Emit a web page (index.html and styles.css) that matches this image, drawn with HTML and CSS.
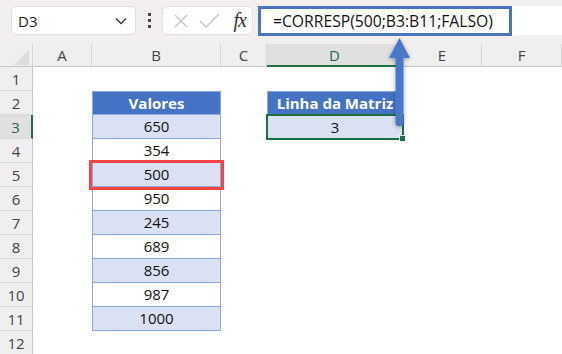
FILE: index.html
```html
<!doctype html>
<html>
<head>
<meta charset="utf-8">
<title>CORRESP</title>
<link rel="stylesheet" href="styles.css">
</head>
<body>
<div class="toolbar">
  <div class="namebox">
    <span>D3</span>
    <svg class="chev" width="12" height="8" viewBox="0 0 12 8"><path d="M1 1.5 L6 6.5 L11 1.5" fill="none" stroke="#333" stroke-width="1.3"/></svg>
  </div>
  <div class="dots"><i></i><i></i><i></i></div>
  <div class="fxbox">
    <svg width="16" height="16" viewBox="0 0 16 16"><path d="M2 2 L14 14 M14 2 L2 14" stroke="#c4c4c4" stroke-width="1.4" fill="none"/></svg>
    <svg width="22" height="16" viewBox="0 0 22 16"><path d="M1 8 L7 14 L20 1" stroke="#c4c4c4" stroke-width="1.4" fill="none"/></svg>
    <span class="fx">fx</span>
  </div>
  <div class="formula">
    <div class="formula-input">=CORRESP(500;B3:B11;FALSO)</div>
  </div>
</div>

<div class="sheet">
  <div class="corner"><b></b></div>
  <div class="hd">A</div><div class="hd">B</div><div class="hd">C</div><div class="hd on">D</div><div class="hd">E</div><div class="hd">F</div>

  <div class="rh">1</div><div></div><div></div><div></div><div></div><div></div><div></div>

  <div class="rh">2</div><div></div><div class="th top">Valores</div><div></div><div class="th top">Linha da Matriz</div><div></div><div></div>

  <div class="rh on">3</div><div></div><div class="td band">650</div><div></div><div class="td band sel">3<em></em></div><div></div><div></div>

  <div class="rh">4</div><div></div><div class="td">354</div><div></div><div></div><div></div><div></div>

  <div class="rh">5</div><div></div><div class="td band found">500</div><div></div><div></div><div></div><div></div>

  <div class="rh">6</div><div></div><div class="td">950</div><div></div><div></div><div></div><div></div>

  <div class="rh">7</div><div></div><div class="td band">245</div><div></div><div></div><div></div><div></div>

  <div class="rh">8</div><div></div><div class="td">689</div><div></div><div></div><div></div><div></div>

  <div class="rh">9</div><div></div><div class="td band">856</div><div></div><div></div><div></div><div></div>

  <div class="rh">10</div><div></div><div class="td">987</div><div></div><div></div><div></div><div></div>

  <div class="rh">11</div><div></div><div class="td band">1000</div><div></div><div></div><div></div><div></div>

  <div class="rh">12</div><div></div><div></div><div></div><div></div><div></div><div></div>
</div>

<svg class="arrow" width="40" height="100" viewBox="0 0 40 100">
  <defs>
    <filter id="sh" x="-50%" y="-20%" width="200%" height="140%">
      <feDropShadow dx="0" dy="1" stdDeviation="2" flood-color="#000" flood-opacity="0.35"/>
    </filter>
  </defs>
  <g filter="url(#sh)" fill="#4a78c9">
    <rect x="15.5" y="20" width="8" height="71" rx="3"/>
    <polygon points="9,23 19.5,3 30,23"/>
  </g>
</svg>
</body>
</html>
```

FILE: styles.css
```css
body {
	margin: 0;
	width: 562px;
	height: 354px;
	overflow: hidden;
	background: #fff;
	font-family: "Open Sans", "Liberation Sans", sans-serif;
	position: relative;
}
.toolbar {
	height: 44px;
	background: #f3efef;
	display: flex;
	align-items: flex-start;
	padding-top: 6px;
	box-sizing: border-box;
}
.namebox {
	margin-left: 11px;
	width: 125px;
	height: 29px;
	box-sizing: border-box;
	background: #fff;
	border: 1px solid #e3dfdf;
	border-radius: 5px;
	display: flex;
	align-items: center;
	justify-content: space-between;
	padding: 0 8px 0 6px;
	font-size: 15px;
	color: #222;
}
.chev {
	margin-top: 1px;
}
.dots {
	width: 26px;
	height: 29px;
	display: flex;
	flex-direction: column;
	align-items: center;
	justify-content: center;
	gap: 3px;
}
.dots i {
	display: block;
	width: 3px;
	height: 3px;
	background: #444;
}
.fxbox {
	width: 91px;
	height: 29px;
	box-sizing: border-box;
	background: #fff;
	border: 1px solid #e3dfdf;
	border-radius: 5px;
	display: flex;
	align-items: center;
	padding: 0 6px 0 10px;
	gap: 10px;
}
.fx {
	margin-left: auto;
	font-family: "Liberation Serif", serif;
	font-style: italic;
	font-size: 20px;
	color: #333;
	letter-spacing: -1px;
}
.formula {
	flex: 1;
	margin-left: 5px;
	height: 29px;
	background: #fff;
}
.formula-input {
	width: 254px;
	height: 30px;
	box-sizing: border-box;
	border: 3px solid #4a74c2;
	padding-left: 12px;
	font-size: 15.7px;
	line-height: 24px;
	color: #111;
}

.sheet {
	display: grid;
	grid-template-columns: 33px 59px 129px 46px 136px 79px 80px;
	grid-template-rows: 23px;
	grid-auto-rows: 24px;
	font-size: 15px;
}
.corner {
	background: #efefef;
	border-right: 1px solid #d6d6d6;
	border-bottom: 1px solid #c6c6c6;
	position: relative;
}
.corner b {
	position: absolute;
	right: 3px;
	bottom: 1px;
	border-style: solid;
	border-width: 0 0 15px 15px;
	border-color: transparent transparent #dcdcdc transparent;
}
.hd {
	background: #efefef;
	border-right: 1px solid #d6d6d6;
	border-bottom: 1px solid #c6c6c6;
	text-align: center;
	line-height: 23px;
	font-size: 15px;
	color: #444;
}
.hd.on {
	background: #e0e0e0;
	color: #1e6e42;
	border-bottom: 2px solid #1e6e42;
}
.rh {
	background: #efefef;
	border-right: 1px solid #c6c6c6;
	border-bottom: 1px solid #dadada;
	text-align: center;
	line-height: 24px;
	font-size: 15px;
	color: #444;
}
.rh.on {
	background: #e0e0e0;
	color: #1e6e42;
	border-right: 2px solid #1e6e42;
}
.th, .td {
	box-sizing: border-box;
	text-align: center;
	line-height: 22px;
	border: 1px solid #8ea9db;
	border-top: 0;
	position: relative;
}
.th.top {
	border-top: 1px solid #8ea9db;
}
.th {
	background: #4472c4;
	color: #fff;
	font-weight: bold;
}
.td {
	color: #111;
	background: #fff;
}
.td.band {
	background: #d9e1f2;
}
.sel {
	z-index: 1;
	border: 0;
	line-height: 24px;
	outline: 2px solid #1e6e42;
	outline-offset: -1px;
}
.sel em {
	position: absolute;
	right: -3px;
	bottom: -3px;
	width: 5px;
	height: 5px;
	background: #1e6e42;
	border: 1px solid #fff;
}
.found {
	z-index: 1;
	outline: 3px solid #f44446;
	outline-offset: 0;
}
.arrow {
	position: absolute;
	left: 380px;
	top: 35px;
	z-index: 2;
}
```
